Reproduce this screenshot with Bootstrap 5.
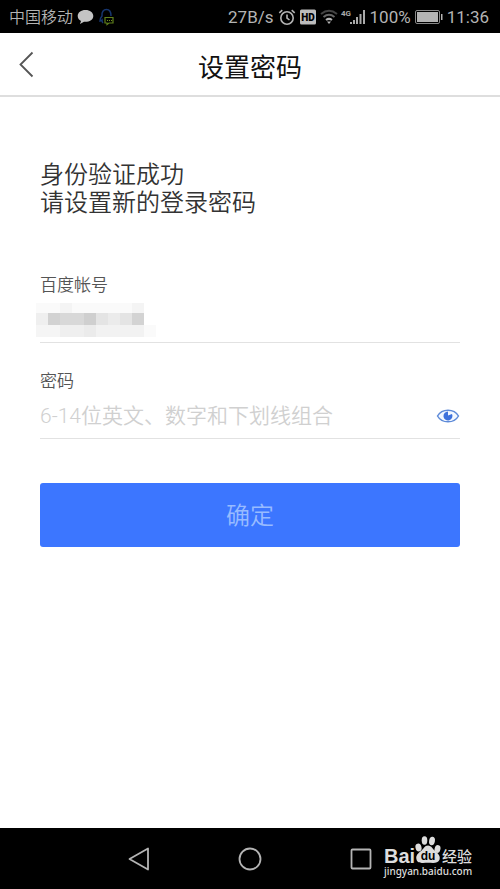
<!DOCTYPE html>
<html lang="zh-CN">
<head>
<meta charset="utf-8">
<meta name="viewport" content="width=device-width, initial-scale=1">
<title>设置密码</title>
<link href="https://cdn.jsdelivr.net/npm/bootstrap@5.3.0/dist/css/bootstrap.min.css" rel="stylesheet">
<style>
  body { font-family: Roboto, "Noto Sans CJK SC", sans-serif; color: #333; background: #fff; }
  svg { display: block; flex: none; }
  .status-bar { height: 33px; background: #000; color: #b4b4b4; font-size: 17px; line-height: 33px; padding: 1px 11px 0 9px; }
  .carrier { font-size: 16px; font-weight: 350; }
  .title-bar { height: 64px; border-bottom: 2px solid #dedede; }
  .title-bar h1 { font-size: 26px; line-height: 32px; font-weight: 400; color: #111; padding-top: 8px; }
  .back-btn { width: 56px; }
  .content { padding: 64px 40px 0; }
  .intro { font-size: 24px; line-height: 28px; font-weight: 350; margin-bottom: 56px; }
  .field { border-bottom: 1px solid #e2e2e2; }
  .field + .field { margin-top: 26px; }
  .field-label { font-size: 17px; line-height: 24px; font-weight: 350; color: #555; }
  .field-row { height: 45px; }
  .masked { margin-left: -4px; }
  .pwd-input, .pwd-input:focus { font-size: 21px; font-weight: 350; line-height: 32px; padding: 0; border: 0; background: transparent; box-shadow: none; }
  .pwd-input::placeholder { color: #d0d0d0; opacity: 1; }
  .submit-btn { height: 64px; margin-top: 44px; font-size: 24px; line-height: 32px; font-weight: 350; border-radius: 3px;
    --bs-btn-color: #98bbff; --bs-btn-bg: #3c76ff; --bs-btn-hover-color: #c3d8ff; --bs-btn-hover-bg: #3369ec; --bs-btn-active-color: #fff; --bs-btn-active-bg: #2d60dc; }
  .nav-keys { height: 61px; background: #000; }
  .key-btn { width: 111px; }
  .source-mark { right: 24px; top: 5px; }
</style>
<script src="https://cdn.jsdelivr.net/npm/bootstrap@5.3.0/dist/js/bootstrap.bundle.min.js"></script>
</head>
<body class="d-flex flex-column min-vh-100">
<div class="status-bar d-flex align-items-center justify-content-between">
  <div class="d-flex align-items-center">
    <span class="carrier">中国移动</span>
    <svg class="ms-1" width="17" height="16" viewBox="0 0 17 16" aria-hidden="true"><path fill="#c4c4c4" d="M8.500 1C4 1 .7 3.600.7 7c0 2.300 1.300 4 3.300 5L3 15l4-2.200c5 .5 9.300-2 9.300-5.800C16.300 3.600 13 1 8.500 1z"/></svg>
    <svg class="ms-1" width="18" height="18" viewBox="0 0 18 18" fill="none" aria-hidden="true"><path stroke="#16356f" stroke-width="1.500" d="M5 15c-1-1-1-2-1-3-.7.700-1.200.800-2 1 0-2 .700-3.500 2-5C3.500 4 5.500 1.500 8.500 1.500S13 4 13 8"/><path stroke="#5f7f1c" stroke-width="1.200" d="M7 9.500h8v5.500h-4l-2 1.500V15H7z"/><path stroke="#6e8e20" stroke-dasharray="1 1" d="M9 12.500h5"/></svg>
  </div>
  <div class="d-flex align-items-center">
    <span>27B/s</span>
    <svg class="ms-1" width="18" height="18" viewBox="0 0 18 18" fill="none" stroke="#b4b4b4" stroke-width="1.600" aria-hidden="true"><circle cx="9" cy="10" r="6.200"/><path d="M9 6.500V10l2.500 2M1.300 4.800l3-2.600M16.700 4.800l-3-2.600"/></svg>
    <svg class="ms-1" width="16" height="16" viewBox="0 0 16 16" role="img" aria-label="HD"><rect y="0.500" width="16" height="15" rx="1.500" fill="#bcbcbc"/><text x="8" y="12" text-anchor="middle" font-size="10" font-weight="900" fill="#000">HD</text></svg>
    <svg class="ms-1" width="18" height="16" viewBox="0 0 18 16" fill="none" stroke-width="2" aria-hidden="true"><path stroke="#444" d="M1 5c5-4 11-4 16 0"/><path stroke="#666" d="M3.500 8c3.500-2.800 7.500-2.800 11 0"/><path stroke="#b4b4b4" d="M6 11c2-1.500 4-1.500 6 0"/><path fill="#b4b4b4" d="M7 12.500h4L9 15z"/></svg>
    <svg width="28" height="18" viewBox="0 0 28 18" fill="#aaa" role="img" aria-label="4G"><text x="3" y="8" font-size="8" font-weight="700">4G</text><path d="M12 14h2v2h-2zM15 12h2v4h-2zM18 9h2v7h-2zM21.500 6h2v10h-2zM25 2h2v14h-2z"/></svg>
    <span class="ms-1">100%</span>
    <svg class="ms-1" width="28" height="16" viewBox="0 0 28 16" aria-hidden="true"><rect x="0.500" y="1.500" width="24" height="13" rx="1.500" fill="none" stroke="#888"/><path fill="#b4b4b4" d="M2 3h21v10H2zM26 5h1.500v6H26z"/></svg>
    <span class="ms-1">11:36</span>
  </div>
</div>
<header class="title-bar d-flex align-items-center">
  <button type="button" class="back-btn btn border-0 p-0 align-self-stretch" aria-label="返回"><svg width="56" height="28" viewBox="0 0 56 28" fill="none" stroke="#555" stroke-width="1.800"><path d="M32.500 2.500 20.500 14.500l12 12"/></svg></button>
  <h1 class="flex-grow-1 text-center mb-0">设置密码</h1>
  <div class="back-btn"></div>
</header>
<main class="content flex-grow-1">
  <p class="intro">身份验证成功<br>请设置新的登录密码</p>
  <form>
    <div class="field">
      <div class="field-label">百度帐号</div>
      <div class="field-row">
        <svg class="masked" width="120" height="42" viewBox="0 0 120 42" shape-rendering="crispEdges" role="img" aria-label="已隐藏的帐号">
          <path fill="#fafafa" d="M0 6h108v10H0z"/><path fill="#f4f4f4" d="M24 6h12v10H24zM96 6h12v10H96z"/>
          <path fill="#efefef" d="M0 16h12v12H0z"/><path fill="#d2d2d2" d="M12 16h48v12H12z"/><path fill="#d8d8d8" d="M24 16h24v12H24z"/><path fill="#cfcfcf" d="M48 16h12v12H48z"/><path fill="#e4e4e4" d="M60 16h36v12H60z"/><path fill="#ebebeb" d="M72 16h12v12H72z"/><path fill="#d3d3d3" d="M96 16h12v12H96z"/>
          <path fill="#f5f5f5" d="M0 28h24v12H0z"/><path fill="#efefef" d="M24 28h36v12H24z"/><path fill="#ebebeb" d="M48 28h12v12H48z"/><path fill="#f2f2f2" d="M60 28h48v12H60z"/><path fill="#fafafa" d="M108 28h12v12h-12z"/>
        </svg>
      </div>
    </div>
    <div class="field">
      <label class="field-label d-block" for="pwd">密码</label>
      <div class="field-row d-flex align-items-center">
        <input id="pwd" class="pwd-input form-control" type="password" placeholder="6-14位英文、数字和下划线组合" autocomplete="new-password">
        <button type="button" class="btn border-0 p-0" aria-label="显示密码"><svg width="24" height="16" viewBox="0 0 24 16"><path fill="#f3f8ff" stroke="#5d8ad8" stroke-width="1.500" d="M1.500 8C6 .2 18 .2 22.500 8 18 15.800 6 15.800 1.500 8z"/><path fill="#3e72dc" d="M12 3.500v4l4-1.500a4.500 4.500 0 1 1-4-2.500z"/></svg></button>
      </div>
    </div>
    <button type="submit" class="submit-btn btn w-100 border-0 pt-2">确定</button>
  </form>
</main>
<nav class="nav-keys position-relative d-flex justify-content-center align-items-center" aria-label="系统导航">
  <button type="button" class="key-btn btn border-0 p-0" aria-label="后退"><svg class="mx-auto" width="24" height="24" viewBox="0 0 24 24" fill="none" stroke="#b4b4b4" stroke-width="1.800" stroke-linejoin="round"><path d="M2.500 12 21 1.500v21z"/></svg></button>
  <button type="button" class="key-btn btn border-0 p-0" aria-label="主屏幕"><svg class="mx-auto" width="24" height="24" viewBox="0 0 24 24" fill="none" stroke="#b4b4b4" stroke-width="1.800"><circle cx="12" cy="12" r="10.500"/></svg></button>
  <button type="button" class="key-btn btn border-0 p-0" aria-label="最近任务"><svg class="mx-auto" width="24" height="24" viewBox="0 0 24 24" fill="none" stroke="#b4b4b4" stroke-width="1.800"><rect x="2.500" y="2.500" width="19" height="19" rx="1"/></svg></button>
  <a class="source-mark position-absolute" href="https://jingyan.baidu.com" aria-label="百度经验">
    <svg width="94" height="50" viewBox="0 0 94 50" fill="#ddd">
      <text x="2" y="30" font-family="Liberation Sans, Arial, sans-serif" font-size="20" font-weight="700">Bai</text>
      <ellipse cx="36.500" cy="14.500" rx="3" ry="4" transform="rotate(-15 36.500 14.500)"/><ellipse cx="42.500" cy="7.500" rx="2.800" ry="4.200"/><ellipse cx="50" cy="8" rx="2.900" ry="4.200" transform="rotate(10 50 8)"/><ellipse cx="55.500" cy="16" rx="2.900" ry="4" transform="rotate(15 55.500 16)"/>
      <path d="M46 12.500c-3.500 0-4.500 3.500-7 5.500-3 2.300-5.500 4.500-4.500 8.500 1 4.500 7 3.300 11.500 3.300s10 1.200 11.500-3c1.200-4-1.500-6.300-4-8.300-2.500-2.200-4-6-7.500-6z"/>
      <text x="46" y="27" text-anchor="middle" font-family="Liberation Sans, Arial, sans-serif" font-size="12" font-weight="700" fill="#000">du</text>
      <text x="60" y="29" font-size="15" font-weight="500">经验</text>
      <text x="2" y="42" font-family="Noto Sans, sans-serif" font-size="10" font-weight="500">jingyan.baidu.com</text>
    </svg>
  </a>
</nav>
</body>
</html>
